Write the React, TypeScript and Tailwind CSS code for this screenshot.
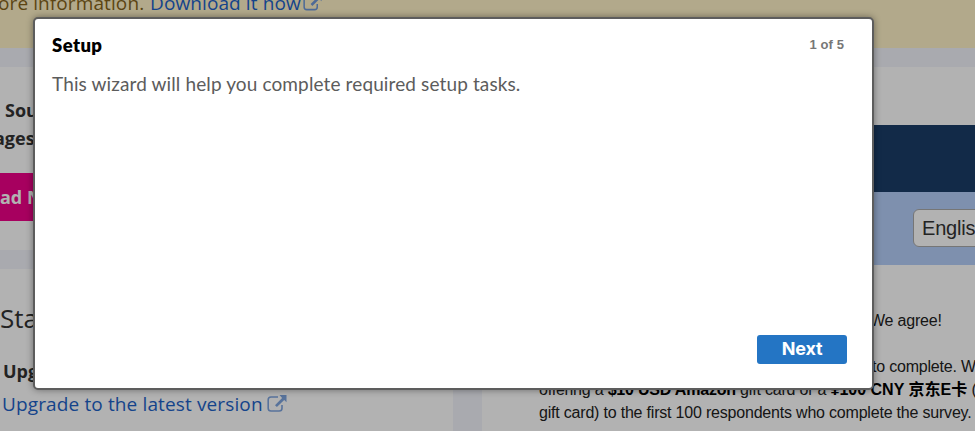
import React from "react";

function ExternalIcon({ className }: { className: string }) {
  return (
    <svg viewBox="0 0 20 17" fill="none" className={className}>
      <path d="M11 2H4Q1.2 2 1.2 4.8v8.4Q1.2 16 4 16h8.2q2.8 0 2.8-2.8V10" stroke="currentColor" strokeWidth="1.6" />
      <path d="M12.5 0H19.5V7.2L17.2 4.9L9.9 12.1L8 10.2L15.1 3Z" fill="currentColor" />
    </svg>
  );
}

function Page() {
  return (
    <div className="flex h-full w-full flex-col bg-[#f3f4fb] font-['Open_Sans',sans-serif]">
      <header className="h-[48px] shrink-0 overflow-hidden whitespace-nowrap bg-[#fff3c8]">
        <div className="-mt-[11px] flex items-center text-[19px] leading-[28px] text-[#85641a]">
          <span className="-ml-[2px] w-[152px] tracking-[0.1px]">ore information.</span>
          <span className="tracking-[0.1px] text-[#1d62c7]">Download it now</span>
          <ExternalIcon className="-mt-[2px] ml-[2px] h-[17px] w-[19px] text-[#6f98d8]" />
        </div>
      </header>
      <div className="mt-[19px] flex min-h-0 flex-1 gap-[29px]">
        <div className="flex w-[453px] shrink-0 flex-col gap-[19px]">
          <section className="h-[183px] shrink-0 overflow-hidden whitespace-nowrap bg-white pt-[29px] text-[18px] font-bold leading-[28px] text-[#333]">
            <p className="pl-[5px]">Source</p>
            <p className="-ml-[6px]">ages</p>
            <div className="mt-[21px] h-[48px] w-[120px] bg-[#ef0088] text-[18px] leading-[48px] text-white">ad Now</div>
          </section>
          <section className="flex-1 overflow-hidden whitespace-nowrap bg-white pt-[31px]">
            <h2 className="text-[26px] leading-[36px] text-[#333]">Status</h2>
            <h3 className="mt-[20px] pl-[3px] text-[18px] font-bold leading-[30px] text-[#333]">Upgrade</h3>
            <div className="mt-[4px] flex items-center pl-[2px] text-[19px] leading-[28px] text-[#1d62c7]">
              <span className="tracking-[0.13px]">Upgrade to the latest version</span>
              <ExternalIcon className="-mt-[2px] ml-[4px] h-[17px] w-[20px] text-[#7fa5df]" />
            </div>
          </section>
        </div>
        <section className="min-w-0 flex-1 overflow-hidden bg-white pt-[58px] font-['Liberation_Sans','Noto_Sans_CJK_SC',sans-serif]">
          <div className="h-[67px] bg-[#1b3d67]" />
          <div className="h-[73px] bg-[#b5cff9] pl-[431px] pt-[17px]">
            <div className="h-[38px] w-[130px] rounded-[6px] border border-[#aaa] bg-white pl-[8px] text-[20px] leading-[36px] tracking-[-0.2px] text-[#333]">English</div>
          </div>
          <div className="whitespace-nowrap pt-[44px] text-[16px] leading-[23px] tracking-[-0.2px] text-[#222]">
            <p className="pl-[388px]">We agree!</p>
            <p className="mt-[23px] pl-[390px]">to complete. We are</p>
            <p className="pl-[57px]">offering a <b className="text-black">$10 USD Amazon</b> gift card or a <b className="tracking-normal text-black">¥100 CNY 京东E卡</b> (JD</p>
            <p className="pl-[57px]">gift card) to the first 100 respondents who complete the survey.</p>
          </div>
        </section>
      </div>
    </div>
  );
}

function Wizard() {
  return (
    <div role="dialog" className="absolute left-[33px] top-[17px] flex h-[373px] w-[841px] flex-col rounded-[5px] border-2 border-[#5d5d5d] bg-white pb-[24px] pl-[17px] pr-[25px] pt-[13px] shadow-[0_0_7px_rgba(0,0,0,0.4)]">
      <div className="flex items-center justify-between leading-[26px]">
        <h1 className="font-['Lato',sans-serif] text-[18.5px] font-extrabold tracking-[0.4px] text-black">Setup</h1>
        <span className="mr-[3px] font-['Liberation_Sans',sans-serif] text-[13px] font-bold tracking-[0.1px] text-[#777]">1 of 5</span>
      </div>
      <p className="mt-[12px] whitespace-nowrap font-['Lato',sans-serif] text-[19px] leading-[28px] tracking-[0.12px] text-[#5c5c5c]">This wizard will help you complete required setup tasks.</p>
      <button className="mt-auto h-[29px] w-[90px] self-end rounded-[3px] bg-[#2475c4] pb-[2px] font-['Inter',sans-serif] text-[18px] font-bold leading-[27px] tracking-[-0.2px] text-white">Next</button>
    </div>
  );
}

export default function App() {
  return (
    <div className="relative h-[431px] w-[975px] overflow-hidden">
      <Page />
      <div className="absolute inset-0 bg-black/30" />
      <Wizard />
    </div>
  );
}
